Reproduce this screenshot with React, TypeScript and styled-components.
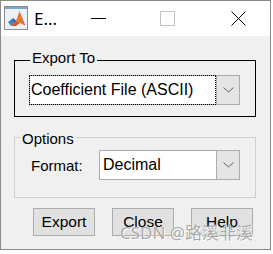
import React from "react";
import styled, { createGlobalStyle } from "styled-components";

const Global = createGlobalStyle`
  html, body { margin: 0; padding: 0; background: #ffffff; }
  body { width: 273px; height: 254px; overflow: hidden; }
  * { box-sizing: border-box; }
`;

const Stage = styled.div`
  position: relative;
  width: 273px;
  height: 254px;
  background: #ffffff;
`;

const Window = styled.div`
  width: 271px;
  height: 250px;
  border: 1px solid #8a8a8a;
  background: #f0f0f0;
  display: flex;
  flex-direction: column;
  overflow: hidden;
`;

const TitleBar = styled.div`
  height: 35px;
  flex: none;
  background: #ffffff;
  display: flex;
  align-items: center;
  padding-left: 3px;
`;

const AppIcon = styled.svg`
  width: 24px;
  height: 24px;
  flex: none;
  margin-top: -2px;
`;

const Title = styled.span`
  margin-left: 6px;
  font-family: "Noto Sans", "Open Sans", sans-serif;
  font-size: 17px;
  color: #000;
  margin-top: -1px;
`;

const Captions = styled.div`
  margin-left: auto;
  display: flex;
  align-items: center;
  padding-right: 24px;
`;

const MinGlyph = styled.span`
  display: block;
  width: 15px;
  height: 1px;
  background: #000;
  margin-top: -1px;
`;

const MaxGlyph = styled.span`
  display: block;
  width: 15px;
  height: 15px;
  border: 1px solid #c4c4c4;
  margin-left: 54px;
`;

const CloseGlyph = styled.svg`
  width: 15px;
  height: 15px;
  margin-left: 56px;
  display: block;
`;

const Body = styled.div`
  display: flex;
  flex-direction: column;
  padding: 24px 14px 0 13px;
  font-family: "Liberation Sans", Arial, sans-serif;
  color: #000;
`;

const Group = styled.div<{ $line: string; $gapTop: number; $padBottom: number }>`
  border: 1px solid ${(p) => p.$line};
  margin-top: ${(p) => p.$gapTop}px;
  padding-bottom: ${(p) => p.$padBottom}px;
  display: flex;
  flex-direction: column;
`;

const GroupTitle = styled.span<{ $shiftTop: number; $indent: number }>`
  align-self: flex-start;
  margin: ${(p) => p.$shiftTop}px 0 0 ${(p) => p.$indent}px;
  padding: 0 2px;
  background: #f0f0f0;
  font-size: 15px;
  line-height: 17px;
`;

const Combo = styled.div<{ $width: number; $focused?: boolean }>`
  width: ${(p) => p.$width}px;
  height: 30px;
  display: flex;
  border: 1px solid #adadad;
  background: #ffffff;
`;

const ComboText = styled.div<{ $focused?: boolean }>`
  flex: 1;
  display: flex;
  align-items: center;
  padding-left: ${(p) => (p.$focused ? 1 : 2)}px;
  font-size: 16px;
  border: 1px dotted ${(p) => (p.$focused ? "#000" : "transparent")};
  margin: ${(p) => (p.$focused ? "-1px 0 -1px -1px" : "0")};
`;

const ComboArrow = styled.div`
  width: 23px;
  flex: none;
  background: #e5e5e5;
  border-left: 1px solid #adadad;
  display: flex;
  align-items: center;
  justify-content: center;
`;

const ExportCombo = styled(Combo)`
  margin: 9px 0 0 14px;
`;

const FormatRow = styled.div`
  display: flex;
  align-items: center;
  margin-top: 3px;
  padding-left: 16px;
`;

const Label = styled.span`
  font-size: 15px;
  width: 68px;
  flex: none;
`;

const ButtonRow = styled.div`
  display: flex;
  gap: 17px;
  margin-top: 10px;
  padding-left: 19px;
`;

const Button = styled.button`
  width: 62px;
  height: 28px;
  padding: 0;
  background: #e1e1e1;
  border: 1px solid #adadad;
  border-radius: 0;
  font-family: "Liberation Sans", Arial, sans-serif;
  font-size: 15.5px;
  color: #000;
`;

const Watermark = styled.div`
  position: absolute;
  left: 120px;
  top: 222px;
  font-family: "Noto Sans", "Noto Sans CJK SC", sans-serif;
  font-size: 17px;
  line-height: 22px;
  color: rgba(140, 140, 140, 0.75);
  text-shadow: 0 0 1px #fff, 1px 1px 0 rgba(255,255,255,0.8);
  white-space: nowrap;
  pointer-events: none;
`;

const Chevron = () => (
  <svg width="11" height="6" viewBox="0 0 11 6">
    <polyline points="0.5,0.5 5.5,5 10.5,0.5" fill="none" stroke="#606060" strokeWidth="1" />
  </svg>
);

export default function App() {
  return (
    <Stage>
      <Global />
      <Window>
        <TitleBar>
          <AppIcon viewBox="0 0 24 24">
            <rect x="0.5" y="0.5" width="23" height="23" fill="#eef2f6" stroke="#8c8c8c" />
            <rect x="1" y="1" width="22" height="2" fill="#7aa7d6" />
            <polygon points="4,16 9,12 12,15 7,20" fill="#3f83c9" />
            <polygon points="9,12 12,15 10.5,17" fill="#1d4f8c" />
            <polygon points="12,15 15.5,5 20,19 16,17" fill="#e9782a" />
            <polygon points="15.5,5 21,19 20,19" fill="#b8321c" />
            <polygon points="7,20 12,15 16,17 12,20" fill="#d9541f" />
          </AppIcon>
          <Title>E...</Title>
          <Captions>
            <MinGlyph />
            <MaxGlyph />
            <CloseGlyph viewBox="0 0 15 15">
              <line x1="0.5" y1="0.5" x2="14.5" y2="14.5" stroke="#000" strokeWidth="1" />
              <line x1="14.5" y1="0.5" x2="0.5" y2="14.5" stroke="#000" strokeWidth="1" />
            </CloseGlyph>
          </Captions>
        </TitleBar>
        <Body>
          <Group $line="#000000" $gapTop={0} $padBottom={11}>
            <GroupTitle $shiftTop={-12} $indent={15}>Export To</GroupTitle>
            <ExportCombo $width={211}>
              <ComboText $focused>Coefficient File (ASCII)</ComboText>
              <ComboArrow>
                <Chevron />
              </ComboArrow>
            </ExportCombo>
          </Group>
          <Group $line="#d0d0d0" $gapTop={20} $padBottom={17}>
            <GroupTitle $shiftTop={-8} $indent={5}>Options</GroupTitle>
            <FormatRow>
              <Label>Format:</Label>
              <Combo $width={141}>
                <ComboText>Decimal</ComboText>
                <ComboArrow>
                  <Chevron />
                </ComboArrow>
              </Combo>
            </FormatRow>
          </Group>
          <ButtonRow>
            <Button>Export</Button>
            <Button>Close</Button>
            <Button>Help</Button>
          </ButtonRow>
        </Body>
      </Window>
      <Watermark>CSDN @路溪非溪</Watermark>
    </Stage>
  );
}
